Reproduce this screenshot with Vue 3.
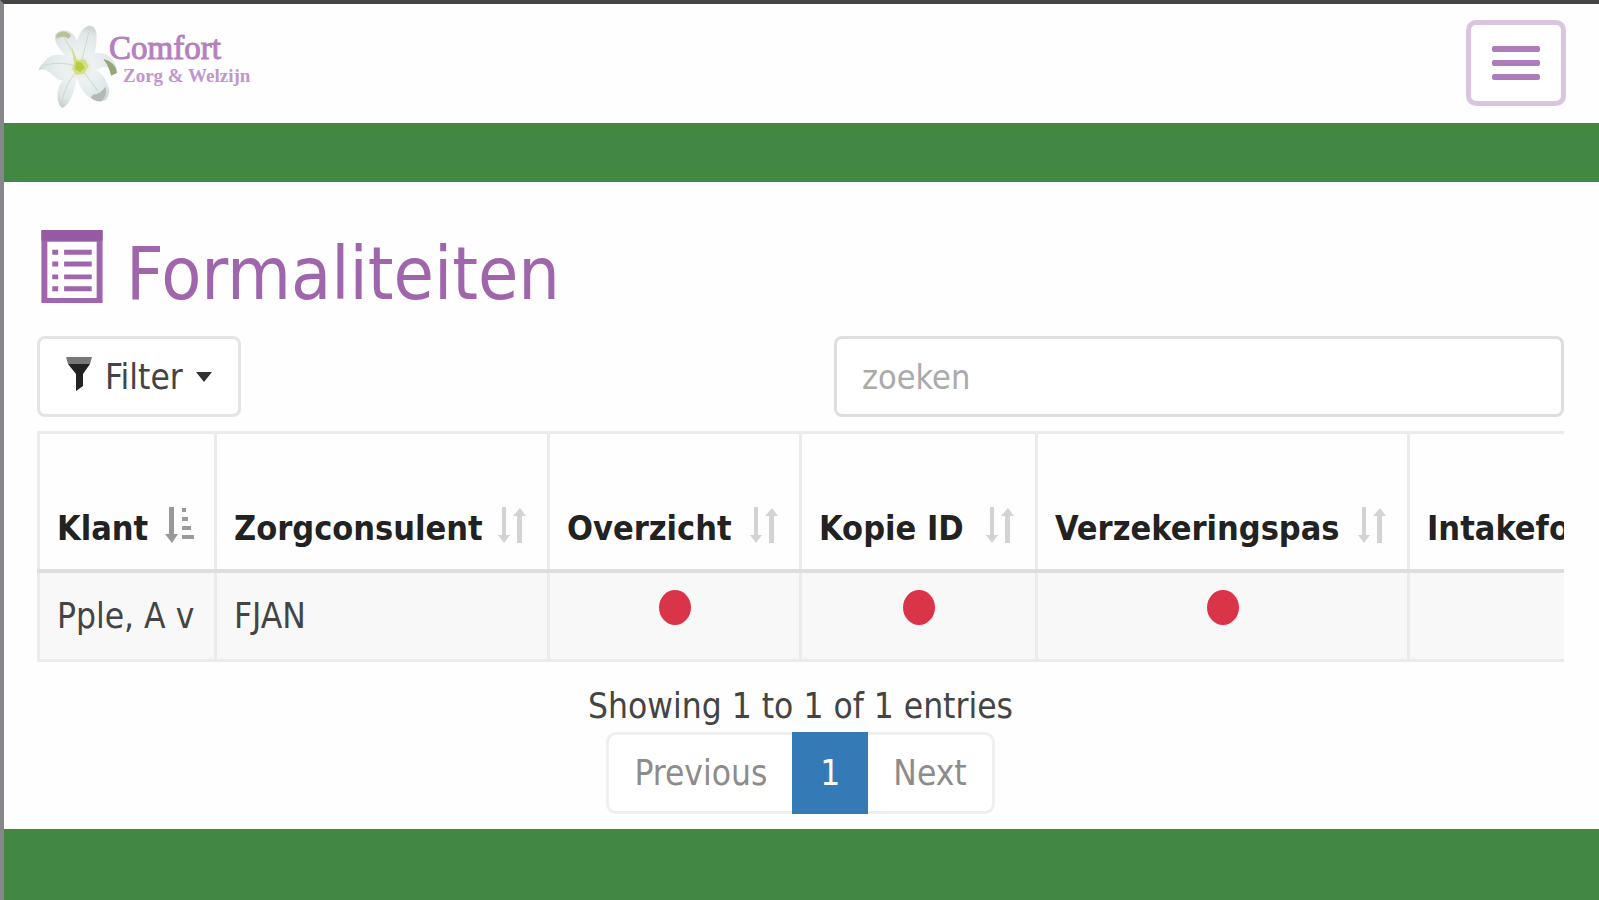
<script setup>
import { ref } from 'vue'

const search = ref('')
const columns = [
  { name: 'Klant', cls: 'c-client', sorted: true },
  { name: 'Zorgconsulent', cls: 'c-consultant' },
  { name: 'Overzicht', cls: 'c-overview' },
  { name: 'Kopie ID', cls: 'c-id' },
  { name: 'Verzekeringspas', cls: 'c-insurance' },
  { name: 'Intakeformulier', cls: 'c-intake' },
]
const rows = [{ client: 'Pple, A v', consultant: 'FJAN', marks: [true, true, true, false] }]
</script>

<template>
  <div class="page">
    <header class="top">
      <a class="brand" href="#">
        <svg class="lily" viewBox="0 0 84 88" aria-hidden="true">
          <defs>
            <radialGradient id="petal" gradientUnits="userSpaceOnUse" cx="43" cy="44" r="46">
              <stop offset="0" stop-color="#e3ead2" />
              <stop offset="0.3" stop-color="#edf1f1" />
              <stop offset="0.75" stop-color="#e0e7e8" />
              <stop offset="1" stop-color="#c3cac6" />
            </radialGradient>
          </defs>
          <g fill="url(#petal)">
            <path d="M40 44C25 30 15 20 18 11c6-8 18-4 21 4 5 9 6 18 6 27z" />
            <path d="M39 44C36 24 41 6 51 2c7-1 9 5 9 12 0 12-3 24-10 33z" />
            <path d="M44 38c8-8 17-10 25-7 6 3 10 8 12 16-6 0-9-3-14-3-7 1-13 8-21 8z" />
            <path d="M43 40C31 30 14 28 7 38c-3 4-6 6-6 9 8-3 12 5 20 10 8 3 17-2 25-9z" />
            <path d="M40 47c8-6 24-2 30 12 4 7 4 13-1 19-9 2-18-2-23-10-5-7-8-14-6-21z" />
            <path d="M40 48c-11 4-21 14-20 26 0 6 2 10 5 12 6-3 10-11 12-19 2-7 3-13 5-17z" />
          </g>
          <g fill="none" stroke="#cdd5d2" stroke-width="1">
            <path d="M41 40C36 29 31 21 27 14M44 40c3-12 6-22 8-32M38 43C27 39 16 40 7 42M45 47c7 9 13 16 18 25M39 49c-8 10-12 19-14 29" />
          </g>
          <path d="M19 11c5-5 12-3 15 1l-3 3c-4-3-8-2-12 0z" fill="#b9c196" />
          <path d="M67 36c7 1 13 6 14 14l-6 3c-2-7-4-12-8-17z" fill="#98a576" />
          <path d="M57 72c5 0 9-3 12-8 2 6 0 11-4 15-5 1-8-1-11-4z" fill="#b3bab3" />
          <path d="m34 22 6 15 8-1 4 7-5 8-8 1-4-6 2-6z" fill="#d3df86" />
          <path d="m39 38 6 2 3 5-5 4-5-3z" fill="#b7cc3e" />
        </svg>
        <span class="brand-text">
          <span class="brand-name">Comfort</span>
          <span class="brand-sub">Zorg &amp; Welzijn</span>
        </span>
      </a>
      <button class="toggle" type="button" aria-label="Menu">
        <span></span><span></span><span></span>
      </button>
    </header>
    <div class="band"></div>

    <main>
      <h1>
        <svg class="list-icon" viewBox="0 0 62 74" aria-hidden="true">
          <path d="M0 0h62v74H0zM6 12v57h50V12z" fill="#a066ac" fill-rule="evenodd" />
          <path d="M0 0h62v11H0z" fill="#965aa2" />
          <path d="M11 20h6v5h-6zm12 0h28v5H23zM11 32h6v5h-6zm12 0h28v5H23zM11 45h6v5h-6zm12 0h28v5H23zM11 57h6v5h-6zm12 0h28v5H23z" fill="#a066ac" />
        </svg>
        <span>Formaliteiten</span>
      </h1>

      <div class="tools">
        <button class="filter" type="button">
          <svg class="funnel" viewBox="0 0 26 34" aria-hidden="true">
            <path d="M0 0h26l-2 7H2z" fill="#777" />
            <path d="M2 7h22l-7 10v12l-7 5V17z" fill="#222" />
          </svg>
          <span>Filter</span>
          <svg class="caret" viewBox="0 0 16 10" aria-hidden="true"><path d="M0 0h16L8 10z" fill="#333" /></svg>
        </button>
        <input v-model="search" class="search" type="text" placeholder="zoeken" aria-label="zoeken" />
      </div>

      <div class="scroller">
        <table>
          <colgroup><col v-for="c in columns" :key="c.name" :class="c.cls" /></colgroup>
          <thead>
            <tr>
              <th v-for="c in columns" :key="c.name" scope="col">
                <div class="head">
                  <span>{{ c.name }}</span>
                  <svg v-if="c.sorted" class="sort" viewBox="0 0 30 36" aria-label="oplopend">
                    <path d="M5 0h5v27h4l-6 9-7-9h4z" fill="#999" />
                    <path d="M18 1h4v4h-4zm0 9h6v4h-6zm0 9h9v4h-9zm0 9h12v4H18z" fill="#999" />
                  </svg>
                  <svg v-else class="sort" viewBox="0 0 30 36" aria-hidden="true">
                    <path d="M5 0h4v28h4l-6 8-6-8h4zM20 36h5V9h4l-6-8-7 8h4z" fill="#d3d3d3" />
                  </svg>
                </div>
              </th>
            </tr>
          </thead>
          <tbody>
            <tr v-for="r in rows" :key="r.client">
              <td>{{ r.client }}</td>
              <td>{{ r.consultant }}</td>
              <td v-for="(m, i) in r.marks" :key="i" class="mark"><span v-if="m" class="dot"></span></td>
            </tr>
          </tbody>
        </table>
      </div>

      <p class="info">Showing 1 to 1 of 1 entries</p>
      <nav class="pages" aria-label="Pagina's">
        <a href="#">Previous</a>
        <a href="#" class="active" aria-current="page">1</a>
        <a href="#">Next</a>
      </nav>
    </main>
    <footer></footer>
  </div>
</template>

<style>
body {
  margin: 0;
  background: #fefefe;
}
</style>

<style scoped>
.page,
.page * {
  box-sizing: border-box;
}
.page {
  display: flex;
  flex-direction: column;
  min-height: 100vh;
  border-top: 4px solid #444;
  border-left: 4px solid #85878a;
  font: 35px/48px "DejaVu Sans Condensed", "DejaVu Sans", sans-serif;
  color: #444;
  overflow: hidden;
}
.top {
  display: flex;
  align-items: flex-start;
  justify-content: space-between;
  padding: 16px 33px 13px;
}
.brand {
  display: flex;
  margin-top: 4px;
  color: #b57fc0;
  text-decoration: none;
  font-family: "Liberation Serif", serif;
}
.lily {
  width: 84px;
  height: 86px;
}
.brand-text {
  display: flex;
  flex-direction: column;
  margin-left: -12px;
  padding-top: 6px;
}
.brand-name {
  font-size: 33px;
  line-height: 36px;
  -webkit-text-stroke: 1px #b57fc0;
}
.brand-sub {
  padding-left: 14px;
  font-size: 19px;
  line-height: 20px;
  font-weight: bold;
  color: #c295cc;
}
.toggle {
  display: flex;
  flex-direction: column;
  justify-content: center;
  gap: 8px;
  width: 100px;
  height: 86px;
  padding: 0 21px;
  border: 5px solid #dac4df;
  border-radius: 10px;
  background: #fff;
}
.toggle span {
  height: 6px;
  border-radius: 2px;
  background: #ae7cba;
}
.band {
  height: 59px;
  background: #428842;
}
main {
  padding: 48px 35px 15px 33px;
}
h1 {
  display: flex;
  align-items: flex-start;
  gap: 23px;
  margin: 0 0 18px;
  padding-left: 4px;
  font-size: 73px;
  line-height: 88px;
  font-weight: normal;
  color: #a066ac;
}
.list-icon {
  width: 62px;
  height: 73px;
}
.tools {
  display: flex;
  justify-content: space-between;
}
.filter {
  display: flex;
  align-items: center;
  gap: 13px;
  height: 81px;
  padding: 0 26px;
  border: 3px solid #e4e4e4;
  border-radius: 8px;
  background: #fff;
  font: inherit;
  color: #444;
}
.funnel {
  width: 26px;
  height: 34px;
  margin-bottom: 6px;
}
.caret {
  width: 16px;
  height: 10px;
}
.search {
  width: 730px;
  max-width: 48%;
  height: 81px;
  padding: 0 25px;
  border: 3px solid #dedede;
  border-radius: 8px;
  background: #fff;
  font: inherit;
  font-size: 34px;
  color: #444;
}
.search::placeholder {
  color: #aaa;
  opacity: 1;
}
.scroller {
  margin-top: 14px;
  overflow: hidden;
}
table {
  width: 1800px;
  table-layout: fixed;
  border-collapse: collapse;
}
.c-client { width: 177px; }
.c-consultant { width: 333px; }
.c-overview { width: 252px; }
.c-id { width: 236px; }
.c-insurance { width: 372px; }
th,
td {
  padding: 0 17px;
  border: 3px solid #ebebeb;
  text-align: left;
  white-space: nowrap;
}
th {
  height: 138px;
  padding-right: 20px;
  padding-bottom: 17px;
  border-bottom: 4px solid #dedede;
  vertical-align: bottom;
  font-size: 34px;
  color: #222;
}
.head {
  display: flex;
  align-items: center;
  justify-content: space-between;
}
.sort {
  width: 30px;
  height: 36px;
  margin-bottom: 6px;
}
td {
  height: 90px;
  padding-right: 0;
  background: #f8f8f8;
}
td.mark {
  padding: 0;
}
.dot {
  display: block;
  width: 32px;
  height: 35px;
  margin: 0 auto 16px;
  border-radius: 50%;
  background: #da3448;
}
.info {
  margin: 20px 0 0;
  text-align: center;
}
.pages {
  display: flex;
  width: max-content;
  margin: 2px auto 0;
  border: 3px solid #efefef;
  border-radius: 10px;
  background: #fff;
}
.pages a {
  padding: 14px 25px;
  color: #8c8c8c;
  text-decoration: none;
}
.pages .active {
  margin: -3px 0;
  padding: 17px 28px;
  background: #337ab7;
  color: #fff;
}
footer {
  flex: 1;
  min-height: 71px;
  background: #428842;
}
</style>
